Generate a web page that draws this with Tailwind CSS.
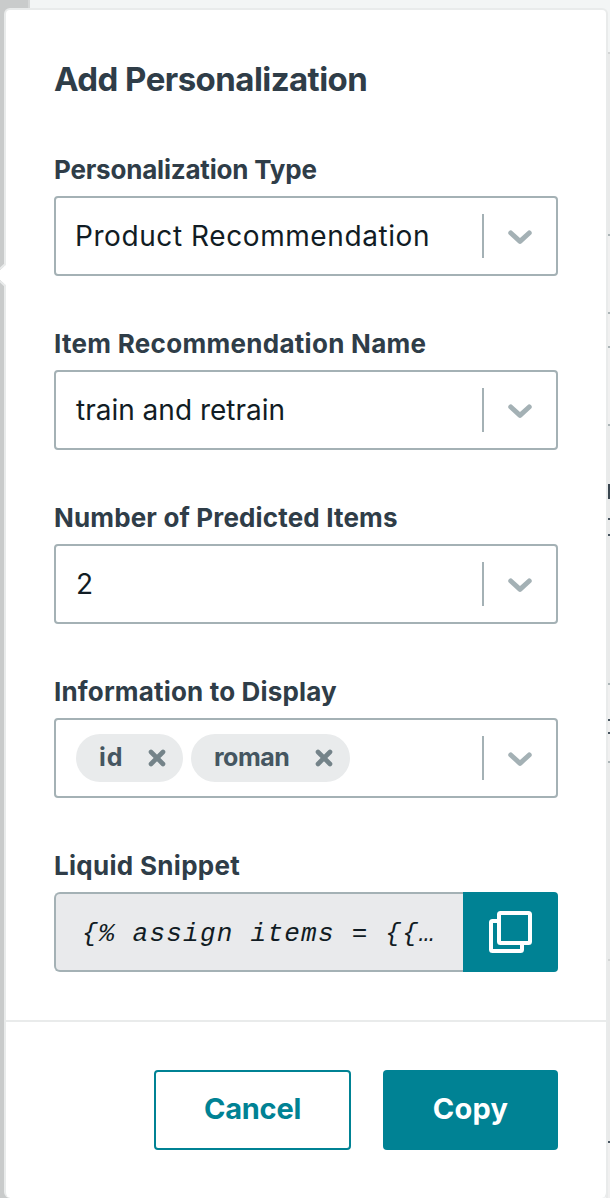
<!DOCTYPE html>
<html lang="en">
<head>
<meta charset="utf-8">
<title>Add Personalization</title>
<script src="https://cdn.jsdelivr.net/npm/@tailwindcss/browser@4"></script>
</head>
<body class="relative h-[1198px] w-[610px] overflow-hidden bg-[#f3f5f5] font-[Inter,sans-serif] text-[#2f3d48]">

<!-- page visible behind the popover -->
<svg class="absolute inset-0" width="610" height="1198" aria-hidden="true" shape-rendering="crispEdges">
  <rect width="28" height="1198" fill="#c9cbcb"/>
  <rect x="28" width="2" height="10" fill="#d6d8d8"/>
  <rect x="606" y="52" width="4" height="1146" fill="#e9eaea"/>
  <rect x="608" y="236" width="2" height="188" fill="#f0f0f0"/>
  <rect x="608" y="684" width="2" height="78" fill="#f0f0f0"/>
  <rect x="608" y="1142" width="2" height="56" fill="#f0f0f0"/>
  <path d="M608 53h2M608 960h2" stroke="#d3d5d5" stroke-width="2"/>
  <path d="M608 235h2M608 313h2M608 347h2M608 425h2M608 684h2M608 762h2" stroke="#acb5b7" stroke-width="2"/>
  <path d="M608 519h2M608 535h2M608 720h2M608 733h2M608 1142h2" stroke="#485560" stroke-width="2"/>
  <path d="M609 484v15" stroke="#3a4650" stroke-width="2"/>
</svg>

<main class="relative mt-2 ml-1 flex h-[1190px] w-[604px] flex-col rounded-md border-2 border-b-0 border-[#e9ebeb] bg-white">
  <svg class="absolute top-[253px] left-[-6px]" width="8" height="24" viewBox="0 0 8 24" aria-hidden="true">
    <path d="M8 0L0 7V17L8 24Z" fill="#fff"/>
    <path d="M5 1.3L0 5.8M5 22.7L0 18.2" stroke="#e9ebeb" stroke-width="2"/>
  </svg>

  <section class="flex flex-col px-12">
    <h1 class="mt-[49px] h-10 text-[33px] leading-10 font-bold tracking-[-0.55px] whitespace-nowrap">Add Personalization</h1>

    <div class="mt-[49px] flex flex-col gap-[46px]">
      <div>
        <div class="h-12 text-[26px] leading-[44px] font-bold tracking-[-0.2px]">Personalization Type</div>
        <div class="flex h-20 items-center rounded-[4px] border-2 border-[#a4b1b5] pl-[19px]">
          <span class="flex-1 text-[28px] tracking-[0.58px] whitespace-nowrap text-[#111c24]">Product Recommendation</span>
          <span class="h-11 w-0.5 bg-[#a4b1b5]"></span>
          <svg class="mx-6" width="24" height="16" viewBox="0 0 24 16" fill="none" stroke="#a4b1b5" stroke-width="5" stroke-linecap="round" stroke-linejoin="round"><path d="M2.8 5L12 13.300L21.2 5"/></svg>
        </div>
      </div>

      <div>
        <div class="h-12 text-[26px] leading-[44px] font-bold tracking-[0.29px]">Item Recommendation Name</div>
        <div class="flex h-20 items-center rounded-[4px] border-2 border-[#a4b1b5] pl-5">
          <span class="flex-1 text-[28px] text-[#111c24]">train and retrain</span>
          <span class="h-11 w-0.5 bg-[#a4b1b5]"></span>
          <svg class="mx-6" width="24" height="16" viewBox="0 0 24 16" fill="none" stroke="#a4b1b5" stroke-width="5" stroke-linecap="round" stroke-linejoin="round"><path d="M2.8 5L12 13.300L21.2 5"/></svg>
        </div>
      </div>

      <div>
        <div class="h-12 text-[26px] leading-[44px] font-bold tracking-[0.15px]">Number of Predicted Items</div>
        <div class="flex h-20 items-center rounded-[4px] border-2 border-[#a4b1b5] pl-5">
          <span class="flex-1 text-[28px] text-[#111c24]">2</span>
          <span class="h-11 w-0.5 bg-[#a4b1b5]"></span>
          <svg class="mx-6" width="24" height="16" viewBox="0 0 24 16" fill="none" stroke="#a4b1b5" stroke-width="5" stroke-linecap="round" stroke-linejoin="round"><path d="M2.8 5L12 13.300L21.2 5"/></svg>
        </div>
      </div>

      <div>
        <div class="h-12 text-[26px] leading-[44px] font-bold tracking-[0.17px]">Information to Display</div>
        <div class="flex h-20 items-center rounded-[4px] border-2 border-[#a4b1b5] pl-5">
          <div class="flex flex-1 gap-2 text-[25px] font-bold text-[#455661]">
            <span class="flex h-12 w-[107px] items-center justify-between rounded-full bg-[#e9ebec] pr-[17px] pl-[23px]"><span class="tracking-[1px]">id</span>
              <svg width="18" height="18" viewBox="0 0 18 18" stroke="#748389" stroke-width="4.6" stroke-linecap="round"><path d="M3 3L15 15M15 3L3 15"/></svg></span>
            <span class="flex h-12 w-[159px] items-center justify-between rounded-full bg-[#e9ebec] pr-[17px] pl-[23px]"><span class="tracking-[-0.5px]">roman</span>
              <svg width="18" height="18" viewBox="0 0 18 18" stroke="#748389" stroke-width="4.6" stroke-linecap="round"><path d="M3 3L15 15M15 3L3 15"/></svg></span>
          </div>
          <span class="h-11 w-0.5 bg-[#a4b1b5]"></span>
          <svg class="mx-6" width="24" height="16" viewBox="0 0 24 16" fill="none" stroke="#a4b1b5" stroke-width="5" stroke-linecap="round" stroke-linejoin="round"><path d="M2.8 5L12 13.300L21.2 5"/></svg>
        </div>
      </div>

      <div>
        <div class="h-12 text-[26px] leading-[44px] font-bold tracking-[0.3px]">Liquid Snippet</div>
        <div class="flex h-20">
          <div class="flex w-[409px] items-center rounded-l-[6px] border-2 border-r-0 border-[#a4b1b5] bg-[#e9eaec] pt-1 pl-[26px] font-['Liberation_Mono',monospace] text-[26px] tracking-[1.25px] whitespace-pre text-[#111c24] italic">{% assign items = {{…</div>
          <button class="flex w-[95px] items-center justify-center rounded-r-[4px] bg-[#008294]" aria-label="Copy snippet">
            <svg width="43" height="42" viewBox="0 0 43 42" fill="none" stroke="#fff" stroke-width="4" stroke-linejoin="round"><rect x="10" y="2" width="31" height="30" rx="1.5"/><path d="M10 10H3.500Q2 10 2 11.500V38.500Q2 40 3.500 40H31.500Q33 40 33 38.500V32"/></svg>
          </button>
        </div>
      </div>
    </div>
  </section>

  <footer class="mt-12 flex justify-end gap-8 border-t-2 border-[#e9ebeb] px-12 pt-12 text-[29px] font-bold">
    <button class="h-20 w-[197px] rounded-[4px] border-2 border-[#008294] pb-0.5 tracking-[-0.25px] text-[#008294]">Cancel</button>
    <button class="h-20 w-[175px] rounded-[4px] bg-[#008294] pb-0.5 tracking-[0.3px] text-white">Copy</button>
  </footer>
</main>
</body>
</html>
